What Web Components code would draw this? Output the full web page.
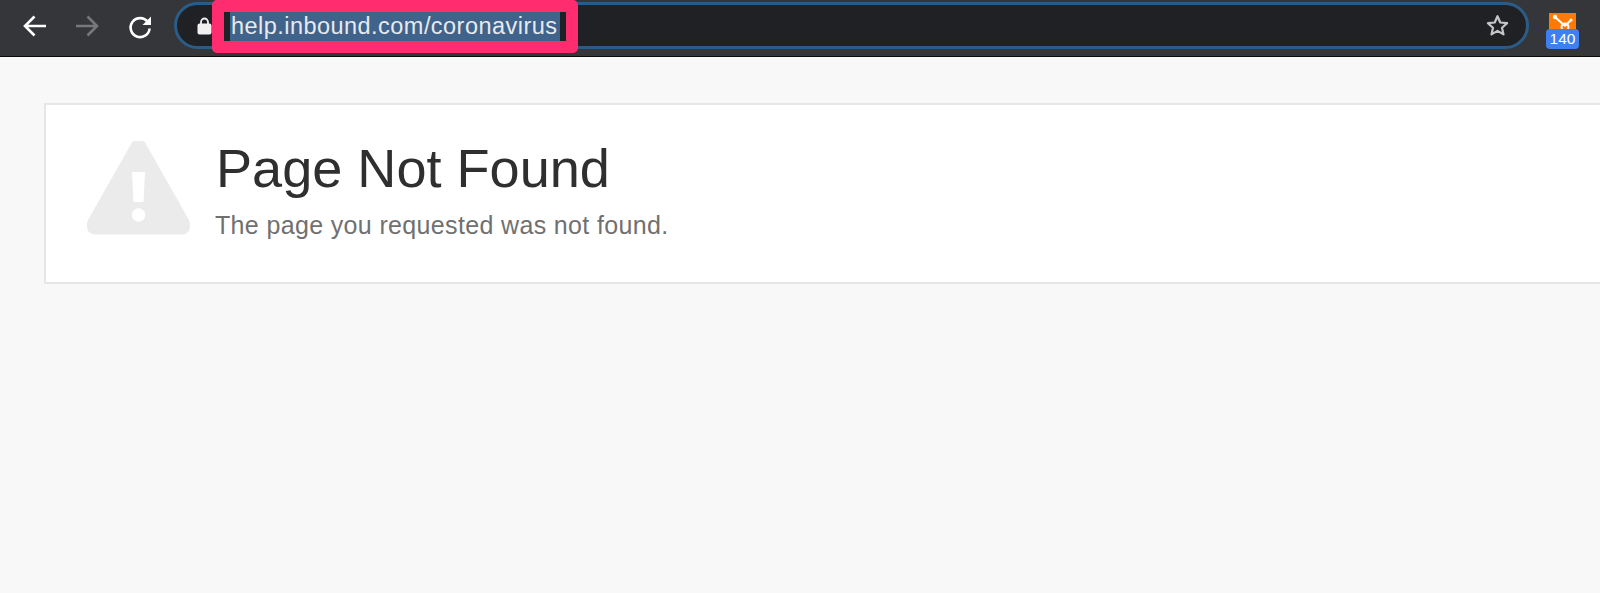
<!DOCTYPE html>
<html>
<head>
<meta charset="utf-8">
<title>Page Not Found</title>
<style>
html, body { margin: 0; height: 100%; overflow: hidden; background: #f8f8f8; font-family: "Liberation Sans", Arial, sans-serif; }
</style>
</head>
<body>
<browser-toolbar url="help.inbound.com/coronavirus"></browser-toolbar>
<error-card title-text="Page Not Found" message="The page you requested was not found."></error-card>
<script>
const toolbarStyle = `
<style>
:host{
  display: flex;
  align-items: center;
  height: 56px;
  box-sizing: content-box;
  background: #35363a;
  border-bottom: 1px solid #0b0b0c;
  padding-left: 22px;
  position: relative;
}
button{
  all: unset;
  display: flex;
  width: 26px;
  height: 26px;
  margin-right: 26px;
  margin-top: -4px;
}
button:last-of-type{
  margin-top: -2px;
  margin-left: 1px;
  margin-right: 21px;
}
svg{
  display: block;
}
.bar{
  box-sizing: border-box;
  width: 1355px;
  height: 47px;
  margin-top: -5px;
  border: 3px solid #2b5c88;
  border-radius: 24px;
  background: #202124;
  display: flex;
  align-items: center;
  padding-left: 20px;
  padding-right: 16px;
  justify-content: space-between;
}
.ext{
  align-self: flex-start;
  margin-left: 17px;
  margin-top: 13px;
  width: 33px;
  display: flex;
  flex-direction: column;
  align-items: center;
}
.logo{
  display: block;
  width: 27px;
  height: 16px;
  background: #ff7a00;
}
.count{
  width: 33px;
  height: 20px;
  border-radius: 4px;
  background: #3f80f0;
  color: #fff;
  font-size: 15.500px;
  line-height: 20px;
  text-align: center;
}
.mark{
  position: absolute;
  left: 212px;
  top: 0;
  box-sizing: border-box;
  width: 366px;
  height: 53px;
  border: 12px solid #ff2d6f;
  border-radius: 5px;
  background: #1c2226;
  padding: 0 6px;
}
.url{
  display: block;
  height: 29px;
  background: #3f638b;
  color: #e8eaed;
  font-size: 23.500px;
  letter-spacing: 0.460px;
  line-height: 29px;
  white-space: nowrap;
  padding-left: 1px;
  overflow: hidden;
}
</style>`;

class BrowserToolbar extends HTMLElement {
  constructor() {
    super();
    this.attachShadow({ mode: 'open' });
  }

  connectedCallback() {
    this.shadowRoot.innerHTML = `${toolbarStyle}
      <button aria-label="back"><svg width="26" height="26" viewBox="0 0 26 26" fill="none" stroke="#fff" stroke-width="2.6"><path d="M24 13H3M12.500 3.500 3 13l9.500 9.500"/></svg></button>
      <button aria-label="forward"><svg width="26" height="26" viewBox="0 0 26 26" fill="none" stroke="#77787b" stroke-width="2.6"><path d="M2 13h21M13.500 3.500 23 13l-9.500 9.500"/></svg></button>
      <button aria-label="reload"><svg width="26" height="26" viewBox="0 0 26 26" fill="none"><path d="M20.800 8A9.500 9.500 0 1 0 22.600 14.500" stroke="#fff" stroke-width="2.600"/><path d="M24 2.500v8.500h-8.500z" fill="#fff"/></svg></button>
      <div class="bar">
        <svg width="15" height="18" viewBox="0 0 15 18"><path d="M4 7V5a3.500 3.500 0 0 1 7 0v2" fill="none" stroke="#f1f1f1" stroke-width="1.800"/><rect x="0.500" y="6.500" width="14" height="11" rx="2" fill="#f1f1f1"/></svg>
        <svg width="25" height="25" viewBox="0 0 25 25" fill="none" stroke="#c4c5c7" stroke-width="2.200" stroke-linejoin="round"><path d="M12.500 3.200l2.800 6.300 6.800.7-5.100 4.500 1.500 6.700-6-3.500-6 3.500 1.500-6.700-5.100-4.500 6.800-.7z"/></svg>
      </div>
      <div class="ext">
        <svg class="logo" viewBox="0 0 27 16" fill="none" stroke="#fff" stroke-width="2"><circle cx="6" cy="4" r="2.200" fill="#fff" stroke="none"/><path d="M6 4l10 9M22 7l-6 6"/><circle cx="22" cy="7" r="1.500" fill="#fff" stroke="none"/><circle cx="16" cy="14" r="3.500"/></svg>
        <span class="count">140</span>
      </div>
      <div class="mark"><span class="url">${this.getAttribute('url')}</span></div>`;
  }
}

const cardTemplate = document.createElement('template');
cardTemplate.innerHTML = `
<style>
:host{
  display: flex;
  align-items: flex-start;
  box-sizing: border-box;
  width: 1600px;
  height: 181px;
  margin: 46px 0 0 44px;
  background: #fff;
  border: 2px solid #e6e6e6;
  padding: 36px 0 0 41px;
}
svg{
  display: block;
  width: 103px;
  height: 94px;
  flex: none;
}
.text{
  margin-left: 26px;
}
h1{
  margin: -4px 0 0;
  font-size: 54.100px;
  font-weight: 400;
  line-height: 62px;
  color: #2f2f2f;
}
p{
  margin: 11px 0 0 -1px;
  font-size: 25px;
  letter-spacing: 0.350px;
  line-height: 30px;
  color: #707070;
}
</style>
<svg viewBox="0 0 103 94"><path fill-rule="evenodd" fill="#ebebeb" d="M45 1.500Q46 0 47.500 0h8Q57 0 58 1.500L102 79q1 2 1 6 0 8-8 8.500H8q-8-.5-8-8.500 0-4 1-6zM45 31l1.500 30h10L58 31zM51.500 67.300a6.700 6.700 0 1 0 .01 0z"/></svg>
<div class="text">
  <h1></h1>
  <p></p>
</div>`;

class ErrorCard extends HTMLElement {
  constructor() {
    super();
    const shadowRoot = this.attachShadow({ mode: 'open' });
    shadowRoot.appendChild(cardTemplate.content.cloneNode(true));
  }

  connectedCallback() {
    this.shadowRoot.querySelector('h1').textContent = this.getAttribute('title-text');
    this.shadowRoot.querySelector('p').textContent = this.getAttribute('message');
  }
}

window.customElements.define('browser-toolbar', BrowserToolbar);
window.customElements.define('error-card', ErrorCard);
</script>
</body>
</html>
